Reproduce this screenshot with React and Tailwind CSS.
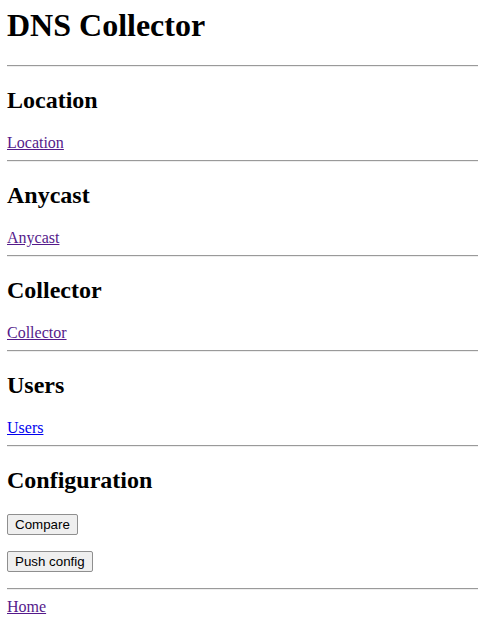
import React from "react";

const sections = [
  { title: "Location", link: "Location", visited: true },
  { title: "Anycast", link: "Anycast", visited: true },
  { title: "Collector", link: "Collector", visited: true },
  { title: "Users", link: "Users", visited: false },
];

const Rule = () => (
  <hr className="h-0 border-0 border-t border-b border-t-[#9a9a9a] border-b-[#eeeeee] my-2" />
);

const Heading = ({ children }) => (
  <h2 className="text-[24px] font-bold leading-[normal] my-[19.92px]">{children}</h2>
);

const Btn = ({ children }) => (
  <form className="mb-4">
    <button
      type="button"
      className="px-[7px] py-[2px] text-[13.333px] leading-[normal] font-['Liberation_Sans',Arial,sans-serif] text-black bg-[#efefef] border border-[#8f8f8f] rounded-[2px] hover:bg-[#e5e5e5]"
    >
      {children}
    </button>
  </form>
);

export default function App() {
  return (
    <div className="min-h-screen bg-white text-black pl-[7px] pt-[7px] pb-2 text-[16px] leading-[normal] font-['Liberation_Serif','Times_New_Roman',serif]">
      <h1 className="text-[32px] font-bold leading-[normal] mb-[21.44px]">DNS Collector</h1>

      {sections.map((s) => (
        <div key={s.title}>
          <Rule />
          <Heading>{s.title}</Heading>
          <div className="mb-2">
            <a
              href="#"
              className={`underline ${s.visited ? "text-[#551a8b]" : "text-[#0000ee]"}`}
            >
              {s.link}
            </a>
          </div>
        </div>
      ))}

      <Rule />
      <Heading>Configuration</Heading>
      <Btn>Compare</Btn>
      <Btn>Push config</Btn>
      <Rule />
      <a href="#" className="underline text-[#551a8b]">
        Home
      </a>
    </div>
  );
}
